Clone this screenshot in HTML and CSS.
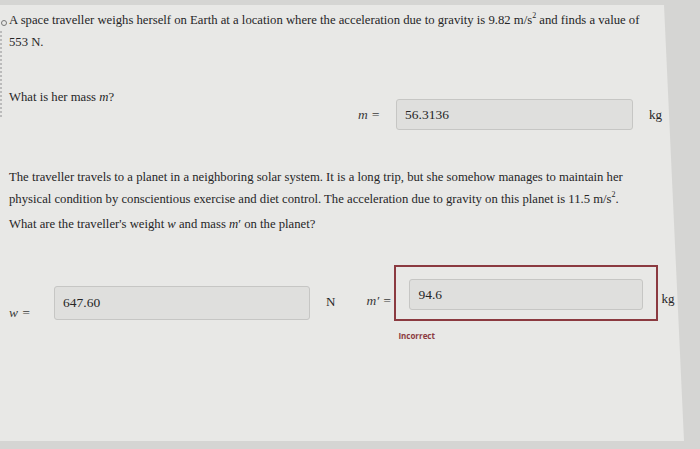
FILE: index.html
```html
<!DOCTYPE html>
<html lang="en">
<head>
  <meta charset="UTF-8">
  <title>Weight and Mass</title>
  <link rel="stylesheet" href="styles.css">
</head>
<body>

<div class="panel">
  <span class="marker"></span>
  <span class="side-strip"></span>

  <p class="text first">A space traveller weighs herself on Earth at a location where the acceleration due to gravity is 9.82&nbsp;m/s<sup>2</sup> and finds a value of 553&nbsp;N.</p>

  <p class="text ask">What is her mass <i>m</i>?</p>

  <div class="row row-mass">
    <span class="label">m&nbsp;=</span>
    <div class="field wide">56.3136</div>
    <span class="unit">kg</span>
  </div>

  <p class="text second">The traveller travels to a planet in a neighboring solar system. It is a long trip, but she somehow manages to maintain her physical condition by conscientious exercise and diet control. The acceleration due to gravity on this planet is 11.5&nbsp;m/s<sup>2</sup>.</p>

  <p class="text ask2">What are the traveller's weight <i>w</i> and mass <i>m</i>&prime; on the planet?</p>

  <div class="row row-planet">
    <span class="label w-label">w&nbsp;=</span>
    <div class="field weight">647.60</div>
    <span class="unit n-unit">N</span>

    <span class="label m-label"><i>m</i>&prime;&nbsp;=</span>
    <div class="wrong">
      <div class="wrong-box">
        <div class="field inner">94.6</div>
      </div>
      <span class="feedback">Incorrect</span>
    </div>
    <span class="unit kg-unit">kg</span>
  </div>
</div>

</body>
</html>
```

FILE: styles.css
```css
body {
  margin: 0;
  padding: 0;
  background-color: #d5d5d3;
  font-family: "Liberation Serif", "Times New Roman", serif;
  color: #262626;
  overflow: hidden;
}
.panel {
  position: relative;
  width: 686px;
  height: 436px;
  margin-top: 5px;
  padding: 0 0 0 9px;
  box-sizing: border-box;
  background-color: #e8e8e6;
  clip-path: polygon(0 0, 664px 0, 684px 100%, 0 100%);
}
.marker {
  position: absolute;
  left: 1px;
  top: 15px;
  width: 4px;
  height: 4px;
  border: 1px solid #777;
  border-radius: 50%;
}
.side-strip {
  position: absolute;
  left: 0;
  top: 26px;
  width: 2px;
  height: 86px;
  background: repeating-linear-gradient(#bbb 0 2px, transparent 2px 4px);
}
.text {
  margin: 0;
  max-width: 655px;
  font-size: 12.7px;
  line-height: 22px;
}
.text sup {
  display: inline-block;
  font-size: 8px;
  line-height: 8px;
  vertical-align: 6px;
}
.first {
  padding-top: 4px;
}
.ask {
  margin-top: 33px;
}
.row {
  display: flex;
  align-items: center;
}
.row > * {
  flex-shrink: 0;
}
.label {
  font-size: 13.5px;
  font-style: italic;
  color: #3a3a3a;
}
.unit {
  font-size: 13px;
}
.field {
  box-sizing: border-box;
  background-color: #dfdfdd;
  border: 1px solid #c6c6c4;
  border-radius: 3px;
  font-size: 13.5px;
  padding-left: 8px;
  display: flex;
  align-items: center;
}
.row-mass {
  margin-top: -9px;
  padding-left: 349px;
}
.row-mass .label {
  width: 38px;
}
.wide {
  width: 237px;
  height: 31px;
}
.row-mass .unit {
  margin-left: 16px;
}
.second {
  margin-top: 36px;
}
.ask2 {
  margin-top: 3px;
}
.row-planet {
  margin-top: 30px;
  align-items: flex-start;
}
.w-label {
  width: 45px;
  margin-top: 40px;
}
.weight {
  width: 256px;
  height: 34px;
  margin-top: 21px;
}
.n-unit {
  margin-left: 16px;
  margin-top: 29px;
}
.m-label {
  margin-left: 31px;
  width: 28px;
  margin-top: 28px;
}
.wrong {
  display: flex;
  flex-direction: column;
}
.wrong-box {
  width: 264px;
  height: 56px;
  box-sizing: border-box;
  border: 2px solid #8b3a40;
  padding: 12px 14px 0 13px;
}
.inner {
  width: 234px;
  height: 31px;
}
.feedback {
  font-family: "Open Sans", "Liberation Sans", sans-serif;
  font-size: 8px;
  font-weight: bold;
  color: #8b3a40;
  margin-top: 9px;
  margin-left: 4px;
}
.kg-unit {
  margin-left: 3px;
  margin-top: 26px;
}
```
